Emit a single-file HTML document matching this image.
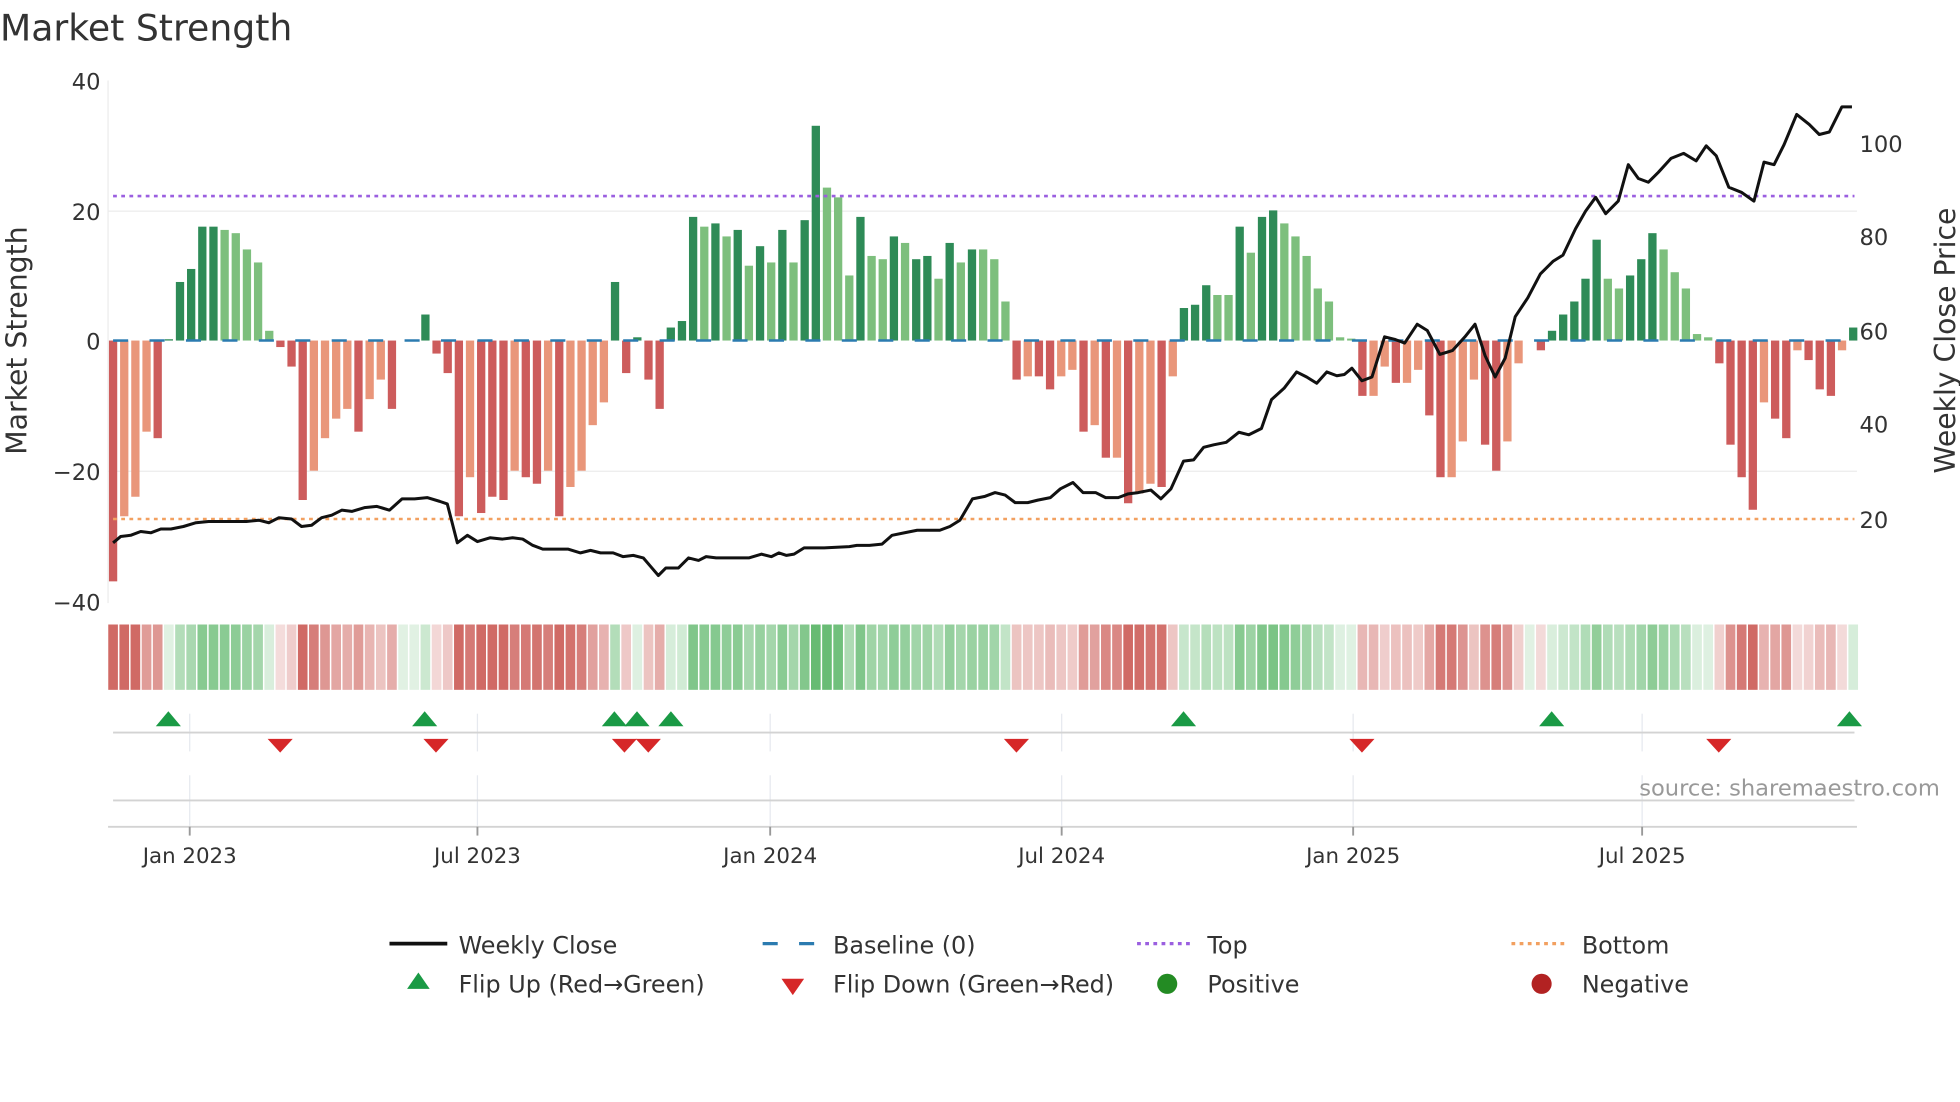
<!DOCTYPE html>
<html><head><meta charset="utf-8"><style>
html,body{margin:0;padding:0;background:#fff;overflow:hidden}
svg{display:block}
text{font-family:"DejaVu Sans","Liberation Sans",sans-serif;fill:#333}
</style></head><body>
<svg id="s" width="1960" height="1102" viewBox="0 0 1560 877" xmlns="http://www.w3.org/2000/svg">
<text x="0" y="32" font-size="28.8">Market Strength</text>
<g stroke="#ececec" stroke-width="1">
<line x1="86" y1="168" x2="1478" y2="168"/>
<line x1="86" y1="375" x2="1478" y2="375"/>
<line x1="86" y1="64" x2="86" y2="480"/>
</g>
<g font-size="18" text-anchor="end">
<text x="80" y="71">40</text><text x="80" y="175">20</text><text x="80" y="278">0</text>
<text x="80" y="382">−20</text><text x="80" y="486">−40</text>
</g>
<g font-size="18">
<text x="1480" y="121">100</text><text x="1480" y="195">80</text><text x="1480" y="270">60</text>
<text x="1480" y="344">40</text><text x="1480" y="420">20</text>
</g>
<text transform="translate(21,271) rotate(-90)" text-anchor="middle" font-size="22.5">Market Strength</text>
<text transform="translate(1556,271) rotate(-90)" text-anchor="middle" font-size="22.5">Weekly Close Price</text>
<g id="bars"></g>
<line x1="90" y1="271" x2="1476" y2="271" stroke="#2b7bb0" stroke-width="2" stroke-dasharray="12,17"/>
<line x1="90" y1="156" x2="1476" y2="156" stroke="#9b5fe0" stroke-width="2" stroke-dasharray="3,3.5"/>
<line x1="90" y1="413" x2="1476" y2="413" stroke="#f2a060" stroke-width="2" stroke-dasharray="3,3.5"/>
<polyline id="price" fill="none" stroke="#111" stroke-width="2.4" stroke-linejoin="round"/>
<g id="strip"></g>
<g stroke="#e6e9ef" stroke-width="1">
<line x1="151" y1="568" x2="151" y2="598"/><line x1="380" y1="568" x2="380" y2="598"/><line x1="613" y1="568" x2="613" y2="598"/><line x1="845" y1="568" x2="845" y2="598"/><line x1="1077" y1="568" x2="1077" y2="598"/><line x1="1307" y1="568" x2="1307" y2="598"/>
<line x1="151" y1="617" x2="151" y2="657"/><line x1="380" y1="617" x2="380" y2="657"/><line x1="613" y1="617" x2="613" y2="657"/><line x1="845" y1="617" x2="845" y2="657"/><line x1="1077" y1="617" x2="1077" y2="657"/><line x1="1307" y1="617" x2="1307" y2="657"/>
</g>
<line x1="90" y1="583" x2="1476" y2="583" stroke="#d3d3d3" stroke-width="1.5"/>
<line x1="90" y1="637" x2="1476" y2="637" stroke="#d3d3d3" stroke-width="1.5"/>
<line x1="86" y1="658" x2="1478" y2="658" stroke="#d3d3d3" stroke-width="1.5"/>
<g stroke="#999" stroke-width="1.5">
<line x1="151" y1="658" x2="151" y2="665"/><line x1="380" y1="658" x2="380" y2="665"/><line x1="613" y1="658" x2="613" y2="665"/><line x1="845" y1="658" x2="845" y2="665"/><line x1="1077" y1="658" x2="1077" y2="665"/><line x1="1307" y1="658" x2="1307" y2="665"/>
</g>
<g id="flips"></g>
<text x="1544" y="633" text-anchor="end" font-size="18" style="fill:#999">source: sharemaestro.com</text>
<g font-size="17" text-anchor="middle">
<text x="151" y="687">Jan 2023</text><text x="380" y="687">Jul 2023</text><text x="613" y="687">Jan 2024</text>
<text x="845" y="687">Jul 2024</text><text x="1077" y="687">Jan 2025</text><text x="1307" y="687">Jul 2025</text>
</g>
<g font-size="19">
<line x1="310" y1="751" x2="356" y2="751" stroke="#111" stroke-width="3"/><text x="365" y="759">Weekly Close</text>
<line x1="607" y1="751" x2="652" y2="751" stroke="#2b7bb0" stroke-width="2.5" stroke-dasharray="12,17"/><text x="663" y="759">Baseline (0)</text>
<line x1="905" y1="751" x2="950" y2="751" stroke="#9b5fe0" stroke-width="2.5" stroke-dasharray="3,3.5"/><text x="961" y="759">Top</text>
<line x1="1203" y1="751" x2="1248" y2="751" stroke="#f2a060" stroke-width="2.5" stroke-dasharray="3,3.5"/><text x="1259" y="759">Bottom</text>
<polygon points="333,774 342,787 324,787" fill="#1a9a45"/><text x="365" y="790">Flip Up (Red→Green)</text>
<polygon points="622,779 640,779 631,792" fill="#d62728"/><text x="663" y="790">Flip Down (Green→Red)</text>
<circle cx="929" cy="783" r="8" fill="#238b23"/><text x="961" y="790">Positive</text>
<circle cx="1227" cy="783" r="8" fill="#b22222"/><text x="1259" y="790">Negative</text>
</g>
</svg>
<script>
var NS="http://www.w3.org/2000/svg";
var D="-37d -27l -24l -14l -15d 0.2d 9d 11d 17.5d 17.5d 17l 16.5l 14l 12l 1.5l -1d -4d -24.5d -20l -15l -12l -10.5l -14d -9l -6l -10.5d 0l 0l 4d -2d -5d -27d -21l -26.5d -24d -24.5d -20l -21d -22d -20l -27d -22.5l -20l -13l -9.5l 9d -5d 0.5d -6d -10.5d 2d 3d 19d 17.5l 18d 16l 17d 11.5l 14.5d 12l 17d 12l 18.5d 33d 23.5l 22l 10l 19d 13l 12.5l 16d 15l 12.5d 13d 9.5l 15d 12l 14d 14l 12.5l 6l -6d -5.5l -5.5d -7.5d -5.5l -4.5l -14d -13l -18d -18l -25d -23.5l -22l -22.5d -5.5l 5d 5.5d 8.5d 7l 7l 17.5d 13.5l 19d 20d 18l 16l 13l 8l 6l 0.5l 0.3l -8.5d -8.5l -4l -6.5d -6.5l -4.5l -11.5d -21d -21l -15.5l -6l -16d -20d -15.5l -3.5l 0l -1.5d 1.5d 4d 6d 9.5d 15.5d 9.5l 8l 10d 12.5d 16.5d 14l 10.5l 8l 1l 0.5l -3.5d -16d -21d -26d -9.5l -12d -15d -1.5l -3d -7.5d -8.5d -1.5l 2d".split(" ");
var bars=document.getElementById("bars"),strip=document.getElementById("strip");
var n=D.length,x0=90,step=(1475-90)/(n-1);
function el(t,a,p){var e=document.createElementNS(NS,t);for(var k in a)e.setAttribute(k,a[k]);p.appendChild(e);return e;}
D.forEach(function(s,i){
 var v=parseFloat(s),dark=s.slice(-1)=="d",x=x0+i*step;
 var c=v>=0?(dark?"#2e8b57":"#7dbf7d"):(dark?"#cd5c5c":"#e9967a");
 var h=Math.abs(v)*5.18;
 if(h>0.3) el("rect",{x:x-3.3,y:v>=0?271-h:271,width:6.6,height:h,fill:c},bars);
 var a=Math.min(1,0.2+Math.abs(v)/30);
 var base=v>=0?[76,175,90]:[200,80,74];
 var col="rgb("+base.map(function(b){return Math.round(255-(255-b)*a*0.85)}).join(",")+")";
 el("rect",{x:x-step/2+0.6,y:497,width:step-1.2,height:52,fill:col},strip);
});
var P="90,432 96,427 104,426 112,423 120,424 128,421 136,421 146,419 156,416 166,415 180,415 196,415 206,414 214,416 222,412 232,413 240,419 248,418 256,412 264,410 272,406 280,407 290,404 300,403 310,406 320,397 330,397 340,396 350,399 356,401 364,432 372,426 380,431 390,428 400,429 408,428 416,429 424,434 432,437 440,437 452,437 462,440 470,438 478,440 488,440 496,443 504,442 512,444 518,451 524,458 530,452 540,452 548,444 556,446 562,443 570,444 580,444 596,444 606,441 614,443 620,440 626,442 632,441 640,436 656,436 676,435 682,434 692,434 702,433 710,426 720,424 730,422 740,422 748,422 756,419 764,414 774,397 784,395 792,392 800,394 808,400 818,400 826,398 836,396 844,389 854,384 862,392 872,392 880,396 890,396 898,393 906,392 916,390 924,397 932,389 942,367 950,366 958,356 966,354 976,352 986,344 994,346 1004,341 1012,318 1022,309 1032,296 1040,300 1048,305 1056,296 1064,299 1070,298 1076,293 1084,303 1092,300 1102,268 1110,270 1118,273 1128,258 1136,263 1146,282 1156,279 1166,268 1174,258 1182,283 1190,300 1198,285 1206,252 1216,237 1226,218 1236,208 1244,203 1254,182 1262,168 1270,157 1278,170 1288,160 1296,131 1304,142 1312,145 1320,137 1330,126 1340,122 1350,128 1358,116 1366,124 1376,149 1386,153 1396,160 1404,129 1412,131 1420,115 1430,91 1440,99 1448,107 1456,105 1466,85 1474,85";
document.getElementById("price").setAttribute("points",P);
var f=document.getElementById("flips");
[134,338,489,507,534,942,1235,1472].forEach(function(x){el("polygon",{points:x+",566 "+(x+10)+",578 "+(x-10)+",578",fill:"#1a9a45"},f);});
[223,347,497,516,809,1084,1368].forEach(function(x){el("polygon",{points:(x-10)+",588 "+(x+10)+",588 "+x+",599",fill:"#d62728"},f);});
</script>
</body></html>
